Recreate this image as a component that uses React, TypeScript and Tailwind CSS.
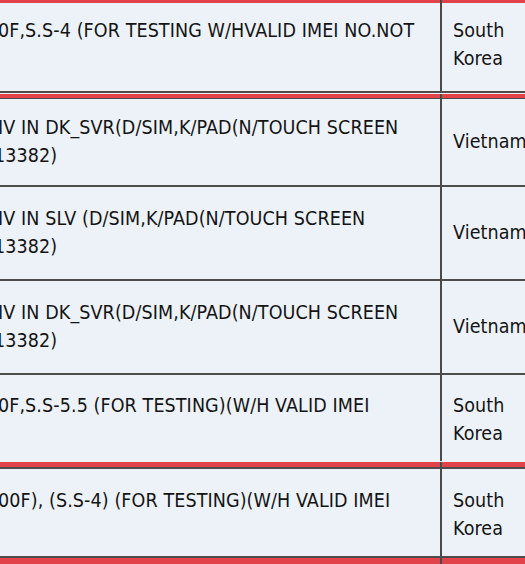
import React from "react";

const RED = "bg-[#e2434a]";

function RedBar({ h }: { h: string }) {
  return (
    <div className={`flex ${h}`}>
      <div className={`w-[440px] ${RED}`} />
      <div className="w-[2px] bg-[#4a4a4a]" />
      <div className={`flex-1 ${RED}`} />
    </div>
  );
}

function HLine() {
  return (
    <div className="flex h-[2px]">
      <div className="w-[440px] bg-[#4d4d4d]" />
      <div className="w-[2px] bg-[#4a4a4a]" />
      <div className="flex-1 bg-[#4d4d4d]" />
    </div>
  );
}

function Row({
  h,
  left,
  right,
  pt = "pt-0",
}: {
  h: string;
  left: React.ReactNode;
  right: React.ReactNode;
  pt?: string;
}) {
  return (
    <div className={`flex ${h} bg-[#edf2f8]`}>
      <div className={`w-[440px] flex flex-col justify-center ${pt} overflow-hidden whitespace-nowrap`}>
        <div className="-ml-[2px]">{left}</div>
      </div>
      <div className="w-[2px] bg-[#4a4a4a]" />
      <div className={`flex-1 flex flex-col justify-center ${pt} pl-[11px] overflow-hidden whitespace-nowrap`}>
        {right}
      </div>
    </div>
  );
}

export default function App() {
  return (
    <div
      className="w-[525px] h-[564px] overflow-hidden bg-[#edf2f8] text-[#141414] text-[19.5px] leading-[28px] tracking-[0.1px]"
      style={{ fontFamily: '"DejaVu Sans Condensed", "DejaVu Sans", sans-serif', fontStretch: "condensed" }}
    >
      <RedBar h="h-[3px]" />
      <Row
        h="h-[88px]"
        pt="pb-[4px]"
        left={
          <>
            <div>0F,S.S-4 (FOR TESTING W/HVALID IMEI NO.NOT</div>
            <div>&nbsp;</div>
          </>
        }
        right={
          <>
            <div>South</div>
            <div>Korea</div>
          </>
        }
      />
      <HLine />
      <div className="h-[1px] bg-[#edf2f8]" />
      <RedBar h="h-[4px]" />
      <div className="h-[1px] bg-[#4d4d4d]" />
      <Row
        h="h-[86px]"
        left={
          <>
            <div>IV IN DK_SVR(D/SIM,K/PAD(N/TOUCH SCREEN</div>
            <div className="-ml-[4px]">13382)</div>
          </>
        }
        right={<div>Vietnam</div>}
      />
      <HLine />
      <Row
        h="h-[92px]"
        left={
          <>
            <div>IV IN SLV (D/SIM,K/PAD(N/TOUCH SCREEN</div>
            <div className="-ml-[4px]">13382)</div>
          </>
        }
        right={<div>Vietnam</div>}
      />
      <HLine />
      <Row
        h="h-[92px]"
        left={
          <>
            <div>IV IN DK_SVR(D/SIM,K/PAD(N/TOUCH SCREEN</div>
            <div className="-ml-[4px]">13382)</div>
          </>
        }
        right={<div>Vietnam</div>}
      />
      <HLine />
      <Row
        h="h-[86px]"
        pt="pt-[4px]"
        left={
          <>
            <div>0F,S.S-5.5 (FOR TESTING)(W/H VALID IMEI</div>
            <div>&nbsp;</div>
          </>
        }
        right={
          <>
            <div>South</div>
            <div>Korea</div>
          </>
        }
      />
      <div className="h-[1px] bg-[#edf2f8]" />
      <RedBar h="h-[5px]" />
      <div className="h-[2px] bg-[#4d4d4d]" />
      <Row
        h="h-[87px]"
        pt="pt-[5px]"
        left={
          <>
            <div>00F), (S.S-4) (FOR TESTING)(W/H VALID IMEI</div>
            <div>&nbsp;</div>
          </>
        }
        right={
          <>
            <div>South</div>
            <div>Korea</div>
          </>
        }
      />
      <div className="h-[2px] bg-[#4d4d4d]" />
      <RedBar h="h-[6px]" />
    </div>
  );
}
